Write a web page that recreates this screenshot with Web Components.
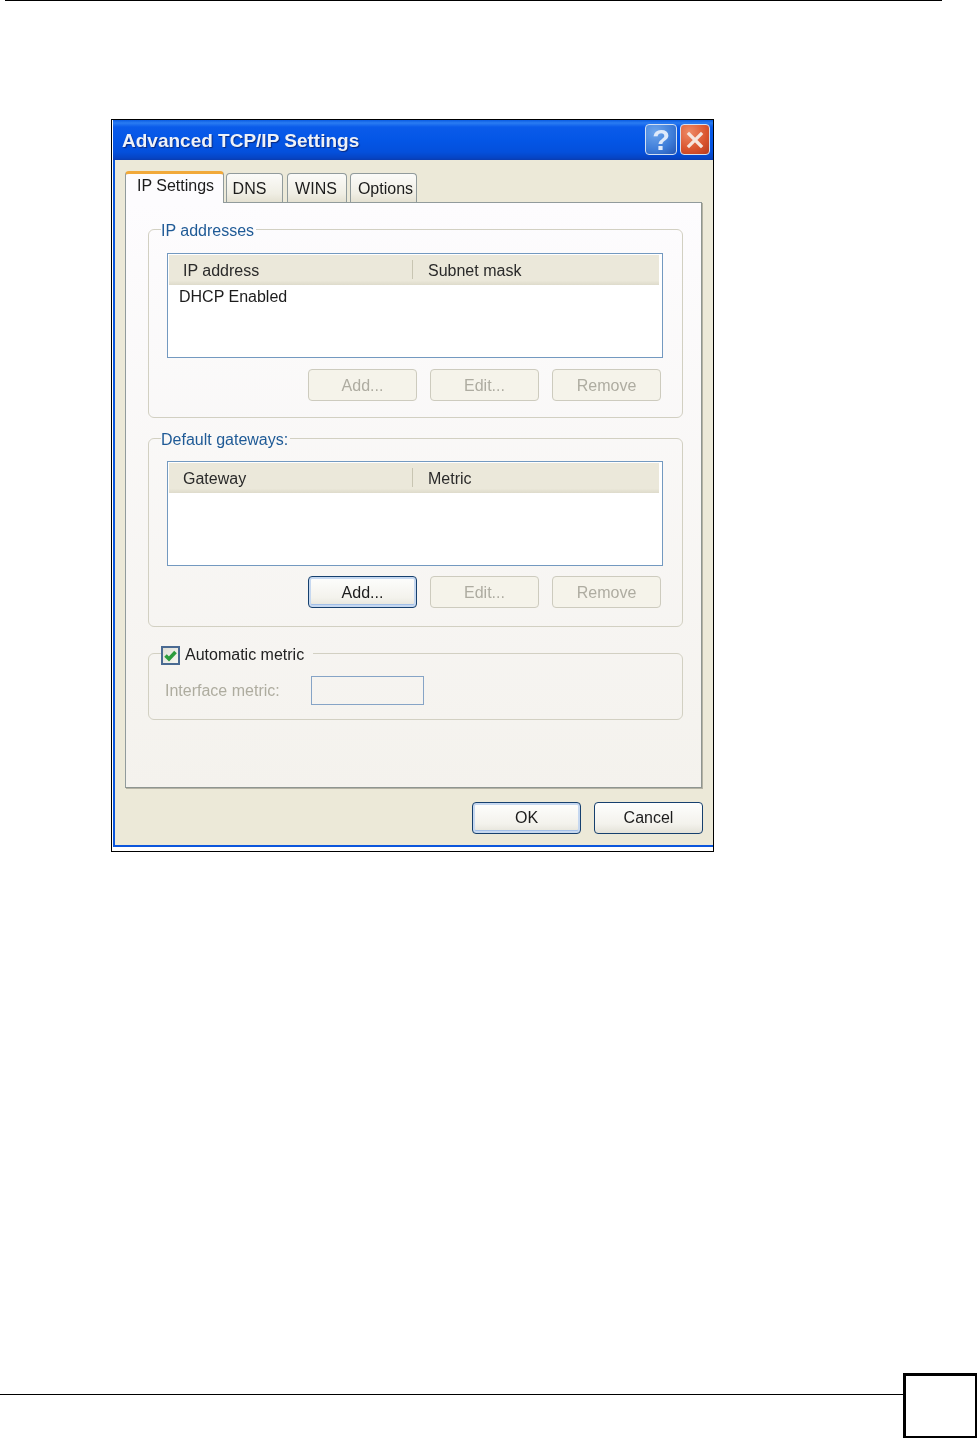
<!DOCTYPE html>
<html>
<head>
<meta charset="utf-8">
<title>Advanced TCP/IP Settings</title>
<style>
  html, body { margin: 0; background: #fff; }
  body { font-family: "Liberation Sans", Arial, sans-serif; color: #1c1c1c; }
</style>
</head>
<body>
<manual-page>
  <xp-dialog slot="figure" heading="Advanced TCP/IP Settings">
    <xp-tab slot="tabs" active style="padding-left:2px">IP Settings</xp-tab>
    <xp-tab slot="tabs" style="width:57px;margin-left:2px;padding-right:10px">DNS</xp-tab>
    <xp-tab slot="tabs" style="width:60px;margin-left:4px;padding-right:2px">WINS</xp-tab>
    <xp-tab slot="tabs" style="width:67px;margin-left:3px;padding-left:4px">Options</xp-tab>

    <xp-group>
      <span slot="legend">IP addresses</span>
      <xp-list col1="IP address" col2="Subnet mask">DHCP Enabled</xp-list>
      <div style="display:flex;justify-content:flex-end;gap:13px;margin:11px 21px 0 0;padding-bottom:16px">
        <xp-button disabled>Add...</xp-button>
        <xp-button disabled>Edit...</xp-button>
        <xp-button disabled>Remove</xp-button>
      </div>
    </xp-group>

    <xp-group style="margin-top:10px;--group-top:13px">
      <span slot="legend">Default gateways:</span>
      <xp-list col1="Gateway" col2="Metric"></xp-list>
      <div style="display:flex;justify-content:flex-end;gap:13px;margin:10px 21px 0 0;padding-bottom:18px">
        <xp-button default>Add...</xp-button>
        <xp-button disabled>Edit...</xp-button>
        <xp-button disabled>Remove</xp-button>
      </div>
    </xp-group>

    <xp-group style="margin-top:16px">
      <xp-check slot="legend">Automatic metric</xp-check>
      <xp-metric>Interface metric:</xp-metric>
    </xp-group>

    <xp-button slot="actions" default style="padding-top:0">OK</xp-button>
    <xp-button slot="actions" strong style="padding-top:0">Cancel</xp-button>
  </xp-dialog>
</manual-page>

<script>
class ManualPage extends HTMLElement {
  constructor() {
    super();
    this.attachShadow({ mode: 'open' });
    this.shadowRoot.innerHTML = `
      <style>
        :host {
          display: flex;
          flex-direction: column;
          width: 977px;
          height: 1438px;
          overflow: hidden;
        }
        #top-rule {
          height: 1px;
          margin: 0 35px 0 5px;
          background: #000;
        }
        #figure {
          display: block;
          margin: 118px 0 0 111px;
        }
        footer {
          margin-top: auto;
          display: flex;
          align-items: flex-start;
        }
        #foot-rule {
          flex: 1;
          height: 1px;
          margin-top: 21px;
          background: #000;
        }
        #page-box {
          box-sizing: border-box;
          width: 74px;
          height: 65px;
          border: 3px solid #000;
          border-right-width: 2px;
          border-bottom-width: 2px;
        }
      </style>
      <div id="top-rule"></div>
      <div id="figure"><slot name="figure"></slot></div>
      <footer>
        <div id="foot-rule"></div>
        <div id="page-box"></div>
      </footer>
    `;
  }
}

class XpDialog extends HTMLElement {
  constructor() {
    super();
    this.attachShadow({ mode: 'open' });
    const heading = this.getAttribute('heading');
    this.shadowRoot.innerHTML = `
      <style>
        :host {
          display: block;
          box-sizing: border-box;
          width: 603px;
          height: 733px;
          border: 1px solid #000;
          padding: 0 0 4px 1px;
          background: #fff;
          filter: blur(.5px);
        }
        #frame {
          box-sizing: border-box;
          height: 100%;
          display: flex;
          flex-direction: column;
          border-left: 2px solid #0b56dc;
          border-bottom: 2px solid #0b56dc;
          background: #ece9d8;
        }
        header {
          flex: none;
          box-sizing: border-box;
          height: 40px;
          margin-left: -2px;
          padding: 4px 3px 0 9px;
          display: flex;
          align-items: flex-start;
          background: linear-gradient(#0a5ce2 0, #2a7cf2 3px, #0a5bea 7px, #0456e6 20px, #0450dc 32px, #0644c4 38px, #0a3cb0 40px);
        }
        h1 {
          margin: 4px auto 0 0;
          font: bold 19px/26px "Liberation Sans", Arial, sans-serif;
          color: #eef2f8;
          text-shadow: 1px 1px 1px #0a2a80;
        }
        .cap {
          box-sizing: border-box;
          width: 32px;
          height: 31px;
          margin-left: 3px;
          border: 1px solid #d3e0f2;
          border-radius: 4px;
          display: flex;
          align-items: center;
          justify-content: center;
        }
        #help {
          background: radial-gradient(circle at 30% 25%, #6ea6ec, #3d7cd8 60%, #2456b4);
          color: #dfeafa;
          font: bold 29px/28px "Liberation Sans", Arial, sans-serif;
        }
        #close {
          width: 30px;
          background: radial-gradient(circle at 30% 25%, #ee8a66, #d9542e 60%, #b63a1e);
        }
        #body {
          flex: 1;
          display: flex;
          flex-direction: column;
          padding: 11px 11px 0 10px;
        }
        #tabs {
          display: flex;
          align-items: flex-end;
          height: 31px;
          position: relative;
          z-index: 1;
        }
        #panel {
          box-sizing: border-box;
          height: 586px;
          padding: 16px 18px 0 22px;
          border: 1px solid #919b9c;
          border-right-color: #8e9590;
          border-bottom-color: #8e9590;
          box-shadow: 1px 1px 0 #b5b3a4;
          background: linear-gradient(#fdfcfe, #f4f2ed);
        }
        #actions {
          display: flex;
          justify-content: flex-end;
          gap: 13px;
          margin: 14px -1px 0 0;
        }
      </style>
      <div id="frame">
        <header>
          <h1>${heading}</h1>
          <div class="cap" id="help">?</div>
          <div class="cap" id="close">
            <svg width="20" height="20" viewBox="0 0 20 20"><path d="M4 4L16 16M16 4L4 16" stroke="#f6e6de" stroke-width="3.2" stroke-linecap="square"/></svg>
          </div>
        </header>
        <div id="body">
          <div id="tabs"><slot name="tabs"></slot></div>
          <div id="panel"><slot></slot></div>
          <div id="actions"><slot name="actions"></slot></div>
        </div>
      </div>
    `;
  }
}

class XpTab extends HTMLElement {
  constructor() {
    super();
    this.attachShadow({ mode: 'open' });
    this.shadowRoot.innerHTML = `
      <style>
        :host {
          display: block;
          box-sizing: border-box;
          height: 29px;
          margin-bottom: 0;
          border: 1px solid #919b9c;
          border-bottom: 0;
          border-radius: 4px 4px 0 0;
          background: linear-gradient(#fbfbf9, #f0eee4 70%, #e4e1d2);
          font-size: 16px;
          line-height: 29px;
          text-align: center;
          color: #1c1c1c;
          white-space: nowrap;
        }
        :host([active]) {
          width: 99px;
          height: 32px;
          margin-bottom: -1px;
          border-top: 3px solid #f1a93a;
          background: #fdfcfe;
          line-height: 24px;
        }
      </style>
      <slot></slot>
    `;
  }
}

class XpGroup extends HTMLElement {
  constructor() {
    super();
    this.attachShadow({ mode: 'open' });
    this.shadowRoot.innerHTML = `
      <style>
        :host { display: block; }
        fieldset {
          margin: 0;
          padding: 0;
          min-width: 0;
          border: 1px solid #d2d0c2;
          border-radius: 6px;
        }
        legend {
          margin-left: 12px;
          padding: 0 2px 0 0;
          height: 20px;
          font-size: 16px;
          line-height: 24px;
          color: #1f5a96;
        }
        #content {
          padding: var(--group-top, 14px) 0 0 18px;
        }
      </style>
      <fieldset>
        <legend><slot name="legend"></slot></legend>
        <div id="content"><slot></slot></div>
      </fieldset>
    `;
  }
}

class XpList extends HTMLElement {
  constructor() {
    super();
    this.attachShadow({ mode: 'open' });
    this.shadowRoot.innerHTML = `
      <style>
        :host {
          display: block;
          box-sizing: border-box;
          width: 496px;
          height: 105px;
          border: 1px solid #7399c0;
          background: #fff;
          font-size: 16px;
        }
        #head {
          display: flex;
          height: 30px;
          margin: 1px 3px 0 1px;
          background: linear-gradient(#ebe8da 85%, #dedbcb);
          line-height: 32px;
          color: #2a2a2a;
        }
        #c1 {
          width: 244px;
          padding-left: 14px;
          box-sizing: border-box;
          position: relative;
        }
        #c1::after {
          content: "";
          position: absolute;
          right: 0;
          top: 5px;
          bottom: 6px;
          width: 1px;
          background: #c8c5b2;
        }
        #c2 { padding-left: 15px; }
        #rows {
          padding: 1px 0 0 11px;
          line-height: 22px;
        }
      </style>
      <div id="head">
        <div id="c1">${this.getAttribute('col1')}</div>
        <div id="c2">${this.getAttribute('col2')}</div>
      </div>
      <div id="rows"><slot></slot></div>
    `;
  }
}

class XpButton extends HTMLElement {
  constructor() {
    super();
    this.attachShadow({ mode: 'open' });
    this.shadowRoot.innerHTML = `
      <style>
        :host {
          display: flex;
          align-items: center;
          justify-content: center;
          box-sizing: border-box;
          width: 109px;
          height: 32px;
          padding-top: 2px;
          border: 1px solid #cdcbbe;
          border-radius: 4px;
          background: #f5f3ea;
          color: #aeaca1;
          font-size: 16px;
        }
        :host([default]), :host([strong]) {
          border: 1.5px solid #16406e;
          background: linear-gradient(#fefefd, #f3f2ec 70%, #e4e2d8);
          color: #1c1c1c;
        }
        :host([default]) {
          box-shadow: inset 0 0 0 2px #c6d8f0, inset 0 -2px 0 1px #a2bfe8;
        }
      </style>
      <slot></slot>
    `;
  }
}

class XpCheck extends HTMLElement {
  constructor() {
    super();
    this.attachShadow({ mode: 'open' });
    this.shadowRoot.innerHTML = `
      <style>
        :host {
          display: flex;
          align-items: center;
          gap: 5px;
          padding-right: 7px;
          font-size: 16px;
          color: #222;
        }
        #box {
          box-sizing: border-box;
          width: 19px;
          height: 19px;
          border: 2px solid #4a6a92;
          background: linear-gradient(135deg, #dfdfd6, #f6f6f0);
        }
        svg { display: block; }
      </style>
      <div id="box">
        <svg width="15" height="15" viewBox="0 0 15 15"><path d="M2.5 7.5L6 11L12.5 4" fill="none" stroke="#2b9c3c" stroke-width="3.6"/></svg>
      </div>
      <slot></slot>
    `;
  }
}

class XpMetric extends HTMLElement {
  constructor() {
    super();
    this.attachShadow({ mode: 'open' });
    this.shadowRoot.innerHTML = `
      <style>
        :host {
          display: flex;
          align-items: center;
          height: 29px;
          margin: -1px 0 14px -2px;
          font-size: 16px;
          color: #aeac9f;
        }
        #label { width: 146px; }
        #field {
          box-sizing: border-box;
          width: 113px;
          height: 29px;
          border: 1px solid #86a4c6;
        }
      </style>
      <div id="label"><slot></slot></div>
      <div id="field"></div>
    `;
  }
}

customElements.define('manual-page', ManualPage);
customElements.define('xp-dialog', XpDialog);
customElements.define('xp-tab', XpTab);
customElements.define('xp-group', XpGroup);
customElements.define('xp-list', XpList);
customElements.define('xp-button', XpButton);
customElements.define('xp-check', XpCheck);
customElements.define('xp-metric', XpMetric);
</script>
</body>
</html>
